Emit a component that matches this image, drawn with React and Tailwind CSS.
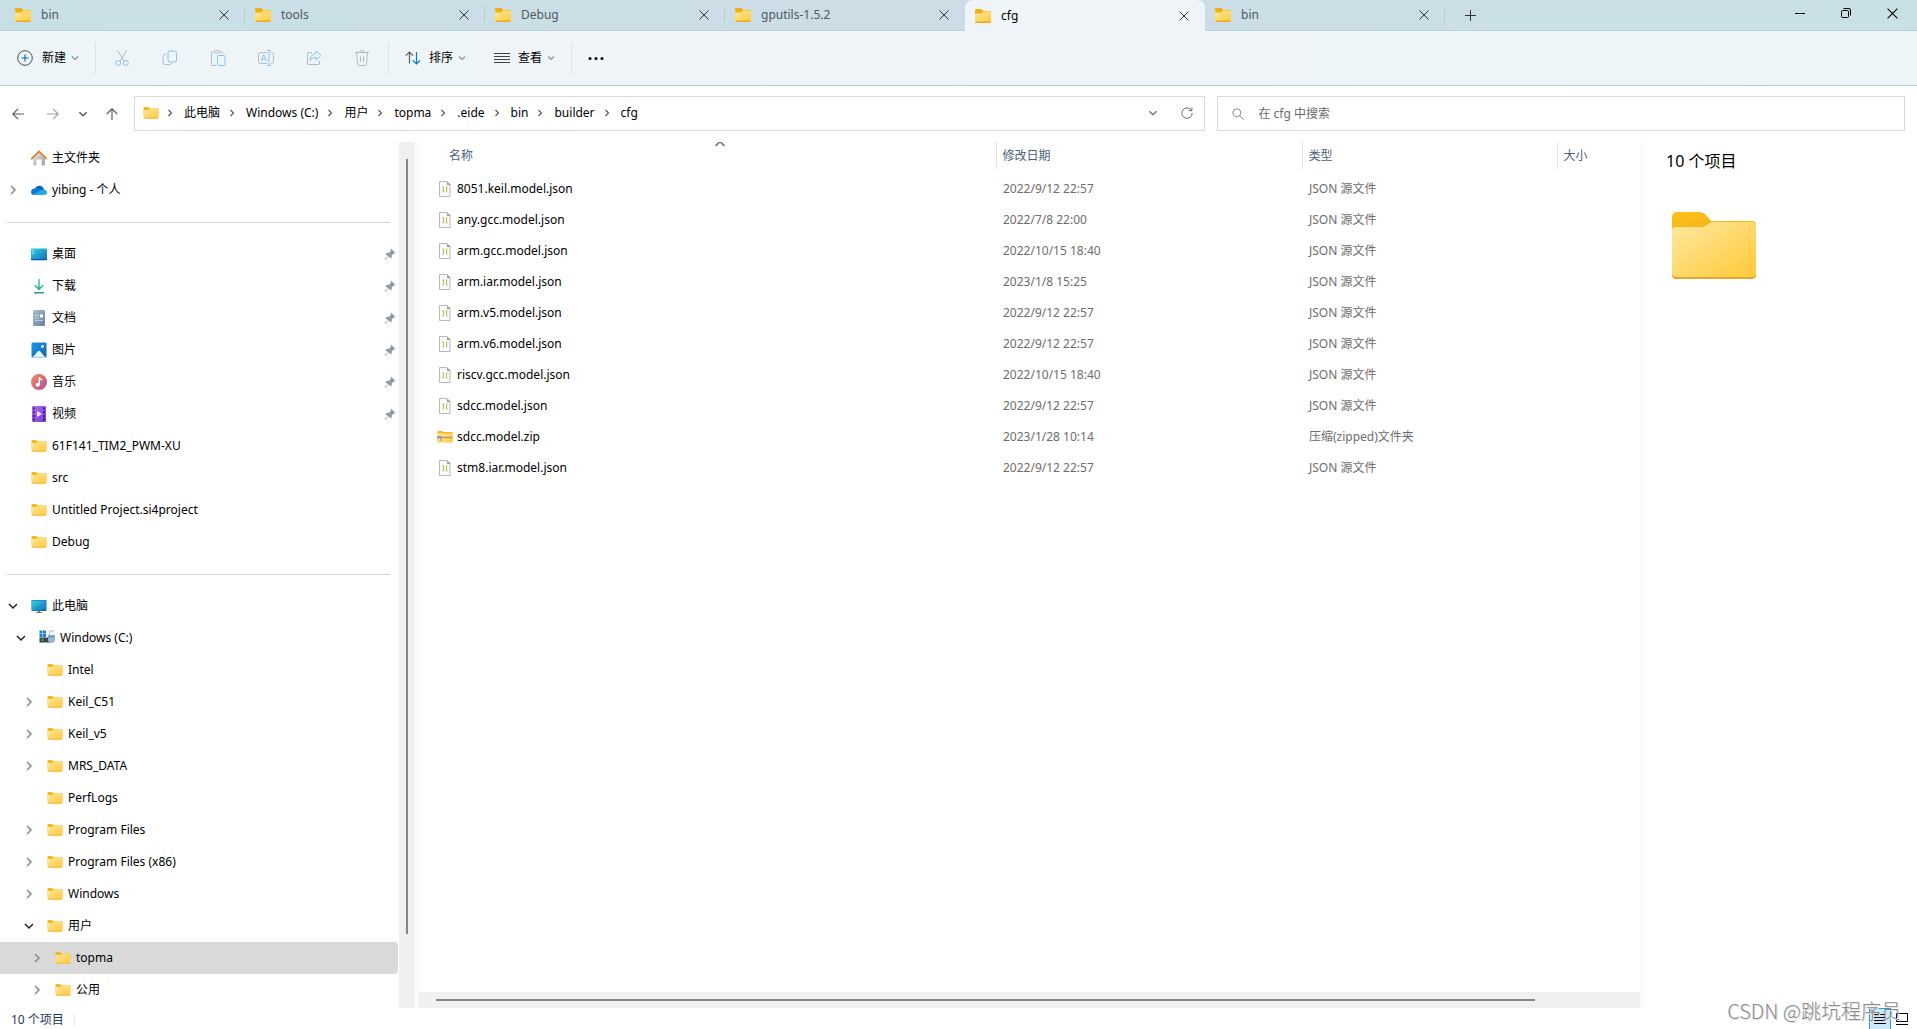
import React, { useState } from 'react'

const tabs = ['bin', 'tools', 'Debug', 'gputils-1.5.2', 'cfg', 'bin']

const crumbs = ['此电脑', 'Windows (C:)', '用户', 'topma', '.eide', 'bin', 'builder', 'cfg']

const places = [
  { name: '主文件夹', icon: 'home', level: 0 },
  { name: 'yibing - 个人', icon: 'cloud', level: 0, state: 'closed' },
  { divider: true },
  { name: '桌面', icon: 'desktop', level: 0, pinned: true },
  { name: '下载', icon: 'download', level: 0, pinned: true },
  { name: '文档', icon: 'document', level: 0, pinned: true },
  { name: '图片', icon: 'picture', level: 0, pinned: true },
  { name: '音乐', icon: 'music', level: 0, pinned: true },
  { name: '视频', icon: 'video', level: 0, pinned: true },
  { name: '61F141_TIM2_PWM-XU', icon: 'folder', level: 0 },
  { name: 'src', icon: 'folder', level: 0 },
  { name: 'Untitled Project.si4project', icon: 'folder', level: 0 },
  { name: 'Debug', icon: 'folder', level: 0 },
  { divider: true },
  { name: '此电脑', icon: 'pc', level: 0, state: 'open' },
  { name: 'Windows (C:)', icon: 'drive', level: 1, state: 'open' },
  { name: 'Intel', icon: 'folder', level: 2 },
  { name: 'Keil_C51', icon: 'folder', level: 2, state: 'closed' },
  { name: 'Keil_v5', icon: 'folder', level: 2, state: 'closed' },
  { name: 'MRS_DATA', icon: 'folder', level: 2, state: 'closed' },
  { name: 'PerfLogs', icon: 'folder', level: 2 },
  { name: 'Program Files', icon: 'folder', level: 2, state: 'closed' },
  { name: 'Program Files (x86)', icon: 'folder', level: 2, state: 'closed' },
  { name: 'Windows', icon: 'folder', level: 2, state: 'closed' },
  { name: '用户', icon: 'folder', level: 2, state: 'open' },
  { name: 'topma', icon: 'folder', level: 3, state: 'closed', selected: true },
  { name: '公用', icon: 'folder', level: 3, state: 'closed' },
]

const files = [
  { name: '8051.keil.model.json', date: '2022/9/12 22:57', type: 'JSON 源文件' },
  { name: 'any.gcc.model.json', date: '2022/7/8 22:00', type: 'JSON 源文件' },
  { name: 'arm.gcc.model.json', date: '2022/10/15 18:40', type: 'JSON 源文件' },
  { name: 'arm.iar.model.json', date: '2023/1/8 15:25', type: 'JSON 源文件' },
  { name: 'arm.v5.model.json', date: '2022/9/12 22:57', type: 'JSON 源文件' },
  { name: 'arm.v6.model.json', date: '2022/9/12 22:57', type: 'JSON 源文件' },
  { name: 'riscv.gcc.model.json', date: '2022/10/15 18:40', type: 'JSON 源文件' },
  { name: 'sdcc.model.json', date: '2022/9/12 22:57', type: 'JSON 源文件' },
  { name: 'sdcc.model.zip', date: '2023/1/28 10:14', type: '压缩(zipped)文件夹', zip: true },
  { name: 'stm8.iar.model.json', date: '2022/9/12 22:57', type: 'JSON 源文件' },
]

const levelPadding = ['pl-[7px]', 'pl-[15px]', 'pl-[23px]', 'pl-[31px]']

// Gradients shared by all icons on the page
const IconDefs = () => (
  <svg className="absolute w-0 h-0" aria-hidden="true">
    <defs>
      <linearGradient id="folderFront" x1="0" y1="0" x2="1" y2="1">
        <stop offset="0" stopColor="#ffe8a0" />
        <stop offset="1" stopColor="#ffc937" />
      </linearGradient>
      <linearGradient id="folderBack" x1="0" y1="0" x2="1" y2="1">
        <stop offset="0" stopColor="#ffc01a" />
        <stop offset="1" stopColor="#eba91a" />
      </linearGradient>
      <linearGradient id="screen" x1="0" y1="0" x2="1" y2="1">
        <stop offset="0" stopColor="#34d4e4" />
        <stop offset="1" stopColor="#0f6cbd" />
      </linearGradient>
      <linearGradient id="green" gradientUnits="userSpaceOnUse" x1="0" y1="0" x2="0" y2="16">
        <stop offset="0" stopColor="#5fd0a8" />
        <stop offset="1" stopColor="#17a08c" />
      </linearGradient>
      <linearGradient id="doc" x1="0" y1="0" x2="1" y2="1">
        <stop offset="0" stopColor="#a9bdd2" />
        <stop offset="1" stopColor="#6482a4" />
      </linearGradient>
      <linearGradient id="picture" x1="0" y1="0" x2="1" y2="1">
        <stop offset="0" stopColor="#1e9be8" />
        <stop offset="1" stopColor="#0a62b4" />
      </linearGradient>
      <linearGradient id="music" x1="0" y1="0" x2="1" y2="1">
        <stop offset="0" stopColor="#f58a5b" />
        <stop offset="1" stopColor="#a852a0" />
      </linearGradient>
      <linearGradient id="video" x1="0" y1="0" x2="1" y2="1">
        <stop offset="0" stopColor="#b070ee" />
        <stop offset="1" stopColor="#7a35dd" />
      </linearGradient>
      <linearGradient id="wall" x1="0" y1="0" x2="1" y2="1">
        <stop offset="0" stopColor="#e8e8e8" />
        <stop offset="1" stopColor="#a2a2a2" />
      </linearGradient>
    </defs>
  </svg>
)

const TabFolderIcon = () => (
  <svg className="w-4 h-[14px] shrink-0" viewBox="0 0 16 14">
    <path d="M0 1.500C0 .6.6 0 1.500 0h4.200c.5 0 .9.200 1.200.5L8.300 2H14.500c.9 0 1.500.6 1.500 1.500V12H0z" fill="#f4b010" />
    <path d="M0 4.500h6.300l1.700-2h6.500c.9 0 1.500.6 1.500 1.500v8.500c0 .9-.6 1.500-1.500 1.500h-13C.6 14 0 13.400 0 12.500z" fill="url(#folderFront)" />
    <path d="M0 12.500h16c0 .9-.6 1.500-1.500 1.500h-13C.6 14 0 13.400 0 12.500z" fill="#e8a925" />
  </svg>
)

const BigFolderIcon = () => (
  <svg className="w-[84px] h-[67px]" viewBox="0 0 84 67">
    <path d="M0 5c0-3 2-5 5-5h22c3 0 5 1 7 3l5 6h41c2.500 0 4 1.500 4 4v20H0z" fill="url(#folderBack)" />
    <path d="M0 19c0-2.500 1.500-4 4-4h24c3 0 5-.5 7-2l3-2c1-.7 2-1 3-1h39c2.500 0 4 1.500 4 4v48c0 2.500-1.500 4-4 4H4c-2.500 0-4-1.500-4-4z" fill="url(#folderFront)" />
    <path d="M0 62c.5 2 2 3 4 3h76c2 0 3.500-1 4-3v1c0 2.500-1.500 4-4 4H4c-2.500 0-4-1.500-4-4z" fill="#e3a72f" />
  </svg>
)

const PlaceIcon = ({ name }) => {
  switch (name) {
    case 'home':
      return (
        <>
          <path d="M2 8l6-5.500L14 8v6.500c0 .5-.3 1-1 1h-2.500V9.500h-5v6H3c-.7 0-1-.5-1-1z" fill="url(#wall)" />
          <path d="M.7 8.700L8 1.500l7.300 7.200" fill="none" stroke="#e07a2c" strokeWidth="1.700" strokeLinecap="round" />
        </>
      )
    case 'cloud':
      return (
        <>
          <path d="M4 7a4.500 4.500 0 0 1 8.300-1L14 9 4 10z" fill="#0a5fb8" />
          <path d="M3.500 6.500C1.500 6.700 0 8 0 10c0 1.800 1.300 3 3 3h5l3-4.500C9 6 6 5.500 3.500 6.500z" fill="#0f78d4" />
          <path d="M2 12.700L10 8c3-1.500 6 0 6 2.500 0 1.500-1.200 2.500-2.700 2.500H3z" fill="#28a8ea" />
        </>
      )
    case 'desktop':
      return (
        <>
          <rect x="0" y="2.500" width="16" height="11.500" rx="1" fill="url(#screen)" />
          <path d="M0 13h16v.5c0 .5-.5.800-1 .8H1c-.5 0-1-.3-1-.8z" fill="#0b559c" />
          <path d="M1.500 4h1.200v1.200H1.500zM1.500 6.500h1.200v1.200H1.500z" fill="#d6fbff" />
        </>
      )
    case 'download':
      return (
        <path d="M8 1v10M3.800 7.200L8 11.400l4.200-4.200M3 14.800h10" fill="none" stroke="url(#green)" strokeWidth="1.600" />
      )
    case 'document':
      return (
        <>
          <rect x="2" y="0" width="12" height="16" rx="1.200" fill="url(#doc)" />
          <path d="M4 5.500h4M4 8h4M4 10.500h8" stroke="#c8d6e4" strokeWidth=".8" />
          <rect x="9" y="4.500" width="3" height="3" fill="#fff" />
        </>
      )
    case 'picture':
      return (
        <>
          <rect x=".5" y=".5" width="15" height="15" rx="1.200" fill="url(#picture)" />
          <path d="M2 15l5.200-6c.5-.5 1.100-.5 1.600 0L14 15z" fill="#eef7ff" />
          <circle cx="11.500" cy="4.500" r="1.400" fill="#fff" />
          <path d="M1 15.300h14" stroke="#a9d8fa" />
        </>
      )
    case 'music':
      return (
        <>
          <circle cx="8" cy="8" r="8" fill="url(#music)" />
          <path d="M8.300 3.500v7" stroke="#fff" strokeWidth="1.300" />
          <path d="M8.300 3.500c.5 1.500 2 1.500 2.700 3" fill="none" stroke="#fff" strokeWidth="1.300" />
          <circle cx="6.700" cy="10.800" r="2" fill="#fff" />
        </>
      )
    case 'video':
      return (
        <>
          <rect x="1" y="0" width="14" height="16" rx="1" fill="url(#video)" />
          <path d="M3 1.500v13.500M13 1.500v13.500" stroke="#3c1a78" strokeWidth="1.700" strokeDasharray="2 1.700" />
          <path d="M6 5l5 3-5 3z" fill="#f3e9ff" />
        </>
      )
    case 'pc':
      return (
        <>
          <rect x=".5" y="2" width="15" height="11" rx=".8" fill="#176a9c" />
          <rect x="1" y="2.500" width="14" height="9.800" rx=".4" fill="url(#screen)" />
          <path d="M7 13h2v1.200H7zM5 14h6v1H5z" fill="#6b7b88" />
        </>
      )
    case 'drive':
      return (
        <>
          <path d="M.5.5h3v3h-3zM4 .5h3v3H4zM.5 4h3v3h-3zM4 4h3v3H4z" fill="#1583d6" />
          <rect x=".5" y="7.500" width="11.500" height="5" rx=".6" fill="#3d444a" />
          <circle cx="3.500" cy="10" r=".9" fill="#3ed860" />
          <path d="M10.500 5.500V3c0-3 4-3 4-.5" fill="none" stroke="#b9c5ce" strokeWidth="1.200" />
          <path d="M9 5h7v5c0 1.500-1.500 3-3.500 3S9 11.500 9 10z" fill="#9fb3c4" />
          <path d="M9 5.500h7v2H9z" fill="#54a9dc" />
        </>
      )
    default:
      return (
        <>
          <path d="M.5 3c0-.6.4-1 1-1H5c.5 0 .8.200 1 .5l.6.900h8.400c.3 0 .5.200.5.600v5H.5z" fill="#f7b81c" />
          <path d="M.5 5h5.300l1.200-1.200h8.500v8.700c0 .6-.3 1-1 1h-13c-.6 0-1-.4-1-1z" fill="url(#folderFront)" />
          <path d="M.5 12.800h15c0 .5-.4.900-1 .9h-13c-.6 0-1-.4-1-.9z" fill="#efbb45" />
        </>
      )
  }
}

const JsonIcon = () => (
  <svg className="w-4 h-4 shrink-0" viewBox="0 0 16 16">
    <path d="M2.500.5h7.500l3 3v12H2.500z" fill="#fafafa" stroke="#b8b8b8" />
    <path d="M10 .5v3.500h3.500z" fill="#9a9a9a" />
    <path d="M6.500 5.500v5.800M9.500 5.500v5.800" fill="none" stroke="#bdbd4c" />
    <path d="M5 6h1M5 11h1M10 6h1M10 11h1" stroke="#d9d99a" />
  </svg>
)

const ZipIcon = () => (
  <svg className="w-4 h-4 shrink-0" viewBox="0 0 16 16">
    <path d="M.5 3c0-.6.400-1 1-1H5l1.300 1H15c.3 0 .5.200.5.600V13H.5z" fill="#f7b81c" />
    <path d="M.5 4.500h15v8c0 .600-.3 1-1 1h-13c-.6 0-1-.4-1-1z" fill="url(#folderFront)" />
    <path d="M3 8.500h12.500" stroke="#a89a6c" strokeWidth="1.400" />
    <path d="M0 7h5v2.500H4V12H3V9.500H0z" fill="#9aa0a6" />
  </svg>
)

const PinIcon = () => (
  <svg className="w-3 h-3 shrink-0" viewBox="0 0 12 12">
    <path d="M7.300.8l3.900 3.900-.8.800-.9-.1-1.700 1.800-.2 2.500-.9.900-2.300-2.300L1.300 12 .6 11.300l3.300-3.100-2.400-2.300.9-.9 2.500-.2 1.800-1.700-.2-.9z" fill="#8f9aa3" />
  </svg>
)

const Chevron = ({ dir = 'down', className = '' }) => {
  const paths = {
    down: 'M2 4l4 4 4-4',
    right: 'M4 2l4 4-4 4',
    up: 'M1.500 8L6 3.500 10.500 8',
  }
  return (
    <svg className={`w-3 h-3 shrink-0 ${className}`} viewBox="0 0 12 12" fill="none" stroke="currentColor" strokeWidth="1.500">
      <path d={paths[dir]} />
    </svg>
  )
}

const CloseIcon = ({ className }) => (
  <svg className={className} viewBox="0 0 10 10" fill="none" stroke="currentColor">
    <path d="M.5.5l9 9M9.500.5l-9 9" />
  </svg>
)

const Tab = ({ label, active, beforeActive }) => (
  <div
    className={`flex w-60 items-center ${
      active
        ? 'rounded-t-lg bg-[#eff4f8] text-black'
        : 'border-b border-[#b9ced6] text-[#4d5a60]'
    }`}
  >
    <button className="flex flex-1 items-center gap-[10px] pl-[10px] text-left">
      <TabFolderIcon />
      <span>{label}</span>
    </button>
    <button aria-label="关闭标签页" className="mr-[15px] text-[#333]">
      <CloseIcon className="w-[10px] h-[10px]" />
    </button>
    <span className={`h-4 w-px ${active || beforeActive ? '' : 'bg-[#b5cad2]'}`} />
  </div>
)

const TitleBar = () => (
  <header className="flex h-[31px] bg-gradient-to-r from-[#c9dfe6] via-[#cddde5] to-[#c9e0e6]">
    <div className="w-[5px] border-b border-[#b9ced6]" />
    {tabs.map((tab, index) => (
      <Tab key={index} label={tab} active={index === 4} beforeActive={index === 3} />
    ))}
    <div className="flex flex-1 items-center justify-between border-b border-[#b9ced6]">
      <button aria-label="新建标签页" className="ml-5 text-[#333]">
        <svg className="w-[11px] h-[11px]" viewBox="0 0 11 11" stroke="currentColor">
          <path d="M5.500 0v11M0 5.500h11" />
        </svg>
      </button>
      <div className="flex items-center pb-1 pr-[2px]">
        <button aria-label="最小化" className="flex w-[46px] justify-center">
          <svg className="w-[10px] h-[10px]" viewBox="0 0 10 10" stroke="#000">
            <path d="M0 5.500h10" />
          </svg>
        </button>
        <button aria-label="还原" className="flex w-[46px] justify-center">
          <svg className="w-[10px] h-[10px]" viewBox="0 0 10 10" fill="none" stroke="#000">
            <rect x=".5" y="2.500" width="7" height="7" rx="1" />
            <path d="M2.500.5h5.500a1.500 1.500 0 0 1 1.500 1.500v5.500" />
          </svg>
        </button>
        <button aria-label="关闭" className="flex w-[46px] justify-center">
          <CloseIcon className="w-[11px] h-[11px]" />
        </button>
      </div>
    </div>
  </header>
)

const ToolButton = ({ label, children }) => (
  <button aria-label={label} disabled className="flex w-12 justify-center">
    <svg className="w-4 h-4" viewBox="0 0 16 16" fill="none" stroke="#b4bcc2">
      {children}
    </svg>
  </button>
)

const Separator = () => <div className="h-8 w-px bg-[#dbe3e7]" />

const Toolbar = () => (
  <div className="flex h-[55px] items-center border-b border-[#b7ccd5] bg-gradient-to-r from-[#edf5f8] via-[#eff4f8] to-[#ecf5f7]">
    <button className="flex items-center pl-[17px] w-[95px]">
      <svg className="mr-[9px] w-4 h-4" viewBox="0 0 16 16" fill="none">
        <circle cx="8" cy="8" r="7.300" stroke="#4a4f53" />
        <path d="M8 4.500v7M4.500 8h7" stroke="#0f6cbd" strokeWidth="1.200" />
      </svg>
      新建
      <Chevron className="ml-[3px] text-[#8b9094] scale-75" />
    </button>
    <Separator />
    <div className="flex pl-[2px] pr-[2px]">
      <ToolButton label="剪切">
        <path d="M3.500 .5l6.300 10.500M12.500 .5L6.200 11" />
        <circle cx="4.200" cy="13" r="2.500" stroke="#8cc1ea" />
        <circle cx="11.800" cy="13" r="2.500" stroke="#8cc1ea" />
      </ToolButton>
      <ToolButton label="复制">
        <path d="M4.500 4H3.500a2.500 2.500 0 0 0-2.500 2.500v6a2 2 0 0 0 2 2h4.500a2.500 2.500 0 0 0 2.300-1.500" />
        <rect x="6" y="1" width="8.500" height="11" rx="2" stroke="#8cc1ea" />
      </ToolButton>
      <ToolButton label="粘贴">
        <path d="M4.500 2H2.500a1 1 0 0 0-1 1v11.500a1 1 0 0 0 1 1H6M9.500 2h2a1 1 0 0 1 1 1v1" />
        <rect x="4.500" y=".5" width="5" height="2.500" rx="1" />
        <rect x="7.500" y="5.500" width="7.500" height="10" rx="1" stroke="#8cc1ea" />
      </ToolButton>
      <ToolButton label="重命名">
        <path d="M9 2.500H2.500A2 2 0 0 0 .5 4.500v7a2 2 0 0 0 2 2H9M13 2.500h.5a2 2 0 0 1 2 2v7a2 2 0 0 1-2 2H13" />
        <path d="M3 11L5.800 4.500 8.500 11M4 9h3.700M11 .5v15M9 .5h4M9 15.500h4" stroke="#8cc1ea" />
      </ToolButton>
      <ToolButton label="共享">
        <path d="M6 2.500H3A1.500 1.500 0 0 0 1.500 4v9A1.500 1.500 0 0 0 3 14.500h9a1.500 1.500 0 0 0 1.500-1.500v-2" />
        <path d="M10 1l5 4.500-5 4.500V7.500c-3 0-4.500 1-6 3 0-3.500 2-6.500 6-7z" stroke="#8cc1ea" strokeLinejoin="round" />
      </ToolButton>
      <ToolButton label="删除">
        <path d="M1 2.500h14M5.500 2.500a2.500 2 0 0 1 5 0M2.500 2.500l1 11.500a1.500 1.500 0 0 0 1.500 1.500h6a1.500 1.500 0 0 0 1.500-1.500l1-11.500M6.500 6.500v5.500M9.500 6.500v5.500" />
      </ToolButton>
    </div>
    <Separator />
    <button className="flex w-[105px] items-center pl-4">
      <svg className="mr-2 w-4 h-4" viewBox="0 0 16 16" fill="none" strokeWidth="1.200">
        <path d="M4.500 13.500V2M.8 5.700L4.500 2l3.700 3.700" stroke="#5a5f63" />
        <path d="M11.500 2v12M7.800 10.300l3.700 3.700 3.700-3.700" stroke="#0078d4" />
      </svg>
      排序
      <Chevron className="ml-[3px] text-[#8b9094] scale-75" />
    </button>
    <button className="flex w-[77px] items-center">
      <svg className="mr-2 w-4 h-4" viewBox="0 0 16 16" stroke="#3e4347">
        <path d="M0 3.500h16M0 6.500h16M0 9.500h16M0 12.500h16" />
      </svg>
      查看
      <Chevron className="ml-[3px] text-[#8b9094] scale-75" />
    </button>
    <Separator />
    <button aria-label="查看更多" className="ml-4">
      <svg className="w-4 h-4" viewBox="0 0 16 16">
        <circle cx="2" cy="8.500" r="1.500" />
        <circle cx="8" cy="8.500" r="1.500" />
        <circle cx="14" cy="8.500" r="1.500" />
      </svg>
    </button>
  </div>
)

const AddressBar = () => {
  const [query, setQuery] = useState('')

  return (
    <div className="flex h-14 items-start pr-3 pt-[10px]">
      <div className="flex h-[35px] w-[134px] shrink-0 items-center pl-3 text-[#5c5c5c]">
        <button aria-label="后退" className="w-[35px]">
          <svg className="w-3 h-3" viewBox="0 0 12 12" fill="none" stroke="currentColor" strokeWidth="1.200">
            <path d="M12 6H.8M6 .8L.8 6 6 11.200" />
          </svg>
        </button>
        <button aria-label="前进" className="w-[30px] text-[#a0a0a0]">
          <svg className="w-3 h-3" viewBox="0 0 12 12" fill="none" stroke="currentColor" strokeWidth="1.200">
            <path d="M0 6h11.200M6 .8L11.200 6 6 11.200" />
          </svg>
        </button>
        <button aria-label="最近浏览的位置" className="w-[29px]">
          <Chevron className="scale-90" />
        </button>
        <button aria-label="向上">
          <svg className="w-3 h-3" viewBox="0 0 12 12" fill="none" stroke="currentColor" strokeWidth="1.200">
            <path d="M6 12V.8M.8 6L6 .8 11.200 6" />
          </svg>
        </button>
      </div>
      <nav className="flex h-[35px] flex-[61] items-center border border-[#d9d9d9] pl-2 pr-[11px] pb-[2px]">
        <svg className="w-4 h-4 shrink-0" viewBox="0 0 16 16">
          <PlaceIcon />
        </svg>
        <ol className="flex flex-1 items-center">
          {crumbs.map((crumb) => (
            <li key={crumb} className="flex items-center">
              <Chevron dir="right" className="ml-[5px] mr-[8px] text-[#555] scale-75" />
              <button className="pr-px">{crumb}</button>
            </li>
          ))}
        </ol>
        <button aria-label="以前的位置" className="mr-[22px] text-[#777]">
          <Chevron className="scale-90" />
        </button>
        <button aria-label="刷新">
          <svg className="w-3 h-3" viewBox="0 0 12 12" fill="none" stroke="#6c6c6c">
            <path d="M10.500 3.500A5.200 5.200 0 1 0 11.200 6M10.900.3v3.400H7.500" />
          </svg>
        </button>
      </nav>
      <label className="ml-3 flex h-[35px] flex-[39] items-center border border-[#d9d9d9] pl-[14px]">
        <svg className="mr-[14px] w-3 h-3" viewBox="0 0 12 12" fill="none" stroke="#8a8a94">
          <circle cx="4.800" cy="4.800" r="4" />
          <path d="M7.700 7.700l4 4" />
        </svg>
        <input
          type="text"
          aria-label="搜索"
          value={query}
          onChange={(e) => setQuery(e.target.value)}
          placeholder="在 cfg 中搜索"
          className="flex-1 outline-none placeholder:text-[#6b6b6b]"
        />
      </label>
    </div>
  )
}

const PlaceRow = ({ place }) => {
  if (place.divider) {
    return (
      <li className="flex h-8 items-center pl-[7px] pr-2">
        <div className="h-px flex-1 bg-[#d4d4d4]" />
      </li>
    )
  }

  return (
    <li className={`flex h-8 items-center pr-[2px] ${levelPadding[place.level]} ${place.selected ? 'rounded-r-sm bg-[#d9d9d9]' : ''}`}>
      <span className="w-6 shrink-0">
        {place.state === 'closed' && <Chevron dir="right" className="text-[#8a8a8a]" />}
        {place.state === 'open' && <Chevron className="text-[#222]" />}
      </span>
      <button className="flex flex-1 items-center gap-[5px] text-left">
        <svg className="w-4 h-4 shrink-0" viewBox="0 0 16 16">
          <PlaceIcon name={place.icon} />
        </svg>
        {place.name}
      </button>
      {place.pinned && <PinIcon />}
    </li>
  )
}

const Sidebar = () => (
  <aside className="flex w-[418px] shrink-0 border-r border-[#f3f3f3]">
    <ul className="mr-px flex-1 overflow-hidden">
      {places.map((place, index) => (
        <PlaceRow key={index} place={place} />
      ))}
    </ul>
    <div className="mr-[2px] flex w-4 justify-center bg-[#f0f0f0] pt-[17px] pb-[74px]">
      <div className="w-[2px] bg-[#868686]" />
    </div>
  </aside>
)

const FileTable = () => (
  <main className="flex min-w-0 flex-1 flex-col border-r border-[#f3f3f3] pl-px pr-px">
    <div className="flex-1 overflow-hidden">
      <table className="w-full table-fixed text-left">
        <thead>
          <tr className="h-[27px] text-[#4c607a]">
            <th className="relative w-[577px] border-r border-[#e2e2e2] pl-[30px] font-normal">
              名称
              <Chevron dir="up" className="absolute left-[295px] top-[-4px] text-[#6b6b6b]" />
            </th>
            <th className="w-[306px] border-r border-[#e2e2e2] pl-[6px] font-normal">修改日期</th>
            <th className="w-[255px] border-r border-[#e2e2e2] pl-[6px] font-normal">类型</th>
            <th className="pl-[6px] font-normal">大小</th>
          </tr>
        </thead>
        <tbody className="before:block before:h-1">
          {files.map((file) => (
            <tr key={file.name} className="h-[31px] text-[#6d6d6d]">
              <td className="pl-[18px] text-black">
                <a href="#" className="flex items-center gap-1">
                  {file.zip ? <ZipIcon /> : <JsonIcon />}
                  {file.name}
                </a>
              </td>
              <td className="pl-[7px]">{file.date}</td>
              <td className="pl-[7px]">{file.type}</td>
              <td />
            </tr>
          ))}
        </tbody>
      </table>
    </div>
    <div className="flex h-4 items-center bg-[#f0f0f0] pl-[17px] pr-[105px]">
      <div className="h-[2px] flex-1 bg-[#868686]" />
    </div>
  </main>
)

const Preview = () => (
  <aside className="w-[275px] shrink-0 pl-6 pt-[7px]">
    <h2 className="text-base">10 个项目</h2>
    <div className="pl-[6px] pt-[39px]">
      <BigFolderIcon />
    </div>
  </aside>
)

const StatusBar = () => (
  <footer className="relative flex h-[21px] items-center justify-between pl-[11px] pr-[9px]">
    <div className="flex items-center pt-[2px] text-[#1e395b]">
      10 个项目
      <span className="ml-[10px] h-3 w-px bg-[#e6e6e6]" />
    </div>
    <div className="flex h-full items-center gap-[5px]">
      <button aria-label="详细信息" className="flex h-full w-[22px] items-center justify-center border border-b-0 border-[#26a0da] bg-[#cce8f7]">
        <svg className="w-3 h-3" viewBox="0 0 12 12" stroke="#000">
          <path d="M0 1.500h12M0 4.500h12M0 7.500h12M0 10.500h12" />
        </svg>
      </button>
      <button aria-label="大缩略图">
        <svg className="w-3 h-3" viewBox="0 0 12 12" fill="none" stroke="#000">
          <path d="M.5.500h11v8H.5zM0 11.500h12" />
        </svg>
      </button>
    </div>
    <span className="pointer-events-none absolute right-4 bottom-1 text-xl font-light text-[#8c8c8c] [text-shadow:1px_1px_0_#e0e0e0] font-['Noto_Sans_CJK_SC',sans-serif]">
      CSDN @跳坑程序员
    </span>
  </footer>
)

const App = () => {
  return (
    <div className="flex h-screen flex-col overflow-hidden bg-white text-xs text-black font-['Noto_Sans','Noto_Sans_CJK_SC',sans-serif]">
      <IconDefs />
      <TitleBar />
      <Toolbar />
      <AddressBar />
      <div className="flex min-h-0 flex-1">
        <Sidebar />
        <FileTable />
        <Preview />
      </div>
      <StatusBar />
    </div>
  )
}

export default App
